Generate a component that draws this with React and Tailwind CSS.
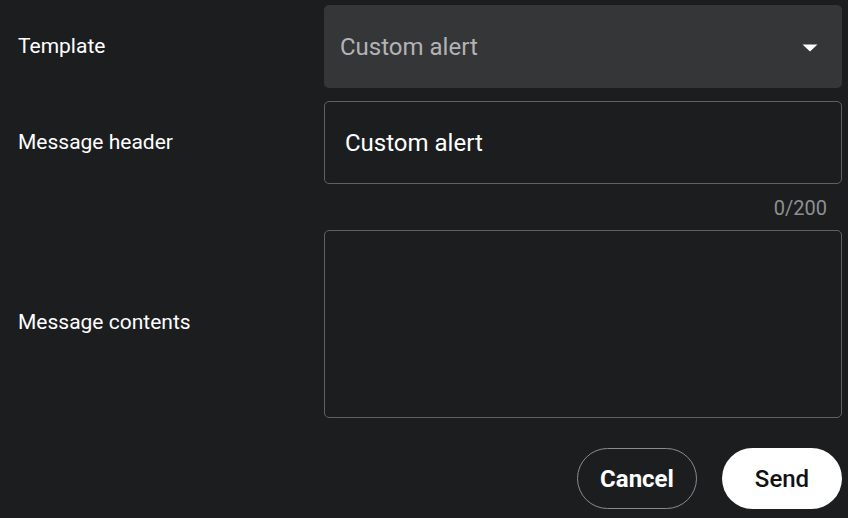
import React from 'react';

const App = () => {
  return (
    <div className="w-[848px] h-[518px] bg-[#1c1d1f] text-white overflow-hidden pt-[5px] pr-[6px]" style={{ fontFamily: 'Roboto, sans-serif' }}>
      {/* Template */}
      <div className="flex items-center">
        <div className="w-[324px] pl-[18px] text-[21px] leading-none">Template</div>
        <div className="flex-1 h-[83px] bg-[#353638] rounded-[5px] flex items-center justify-between pl-4 pr-6">
          <span className="text-[24px] text-[#b3b3b5]">Custom alert</span>
          <svg width="16" height="8" viewBox="0 0 16 8" className="mt-[2px]">
            <path d="M0.5 0.5 L15.5 0.5 L8 7.5 Z" fill="#ffffff" />
          </svg>
        </div>
      </div>

      {/* Message header */}
      <div className="flex items-center mt-[13px]">
        <div className="w-[324px] pl-[18px] text-[21px] leading-none">Message header</div>
        <div className="flex-1 h-[83px] border border-[#5f6063] rounded-[5px] flex items-center pl-5">
          <span className="text-[24px] text-white">Custom alert</span>
        </div>
      </div>

      {/* Counter */}
      <div className="flex justify-end h-[46px] items-center pr-[15px] text-[20px] text-[#8e8f91] pt-[1px]">0/200</div>

      {/* Message contents */}
      <div className="flex items-center">
        <div className="w-[324px] pl-[18px] text-[21px] leading-none pb-[4px]">Message contents</div>
        <div className="flex-1 h-[188px] border border-[#5f6063] rounded-[5px]"></div>
      </div>

      {/* Actions */}
      <div className="flex justify-end gap-[25px] mt-[30px]">
        <button className="w-[120px] h-[61px] rounded-full border border-[#8a8b8d] text-[24px] font-bold text-white">Cancel</button>
        <button className="w-[120px] h-[61px] rounded-full bg-white text-[24px] font-medium text-[#111]">Send</button>
      </div>
    </div>
  );
};

export default App;
